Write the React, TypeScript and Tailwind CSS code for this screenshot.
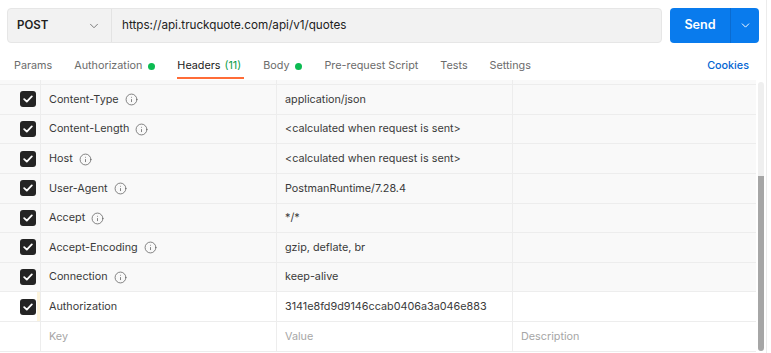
import React from 'react';
import { ChevronDown, Info } from 'lucide-react';

interface HeaderRow {
  key: string;
  value: string;
  info: boolean;
  edited?: boolean;
}

const rows: HeaderRow[] = [
  { key: 'Content-Type', value: 'application/json', info: true },
  { key: 'Content-Length', value: '<calculated when request is sent>', info: true },
  { key: 'Host', value: '<calculated when request is sent>', info: true },
  { key: 'User-Agent', value: 'PostmanRuntime/7.28.4', info: true },
  { key: 'Accept', value: '*/*', info: true },
  { key: 'Accept-Encoding', value: 'gzip, deflate, br', info: true },
  { key: 'Connection', value: 'keep-alive', info: true },
  { key: 'Authorization', value: '3141e8fd9d9146ccab0406a3a046e883', info: false, edited: true },
];

const Checkbox = () => (
  <div className="w-4 h-4 rounded-[3px] bg-[#242424] flex items-center justify-center">
    <svg width="10" height="8" viewBox="0 0 10 8" fill="none">
      <path d="M1.2 4.2L3.8 6.6L8.8 1.4" stroke="white" strokeWidth="1.8" strokeLinecap="round" strokeLinejoin="round" />
    </svg>
  </div>
);

const Tab = ({ label, active, dot, count }: { label: string; active?: boolean; dot?: boolean; count?: string }) => (
  <div className="relative h-full flex items-center">
    <span className={active ? 'text-[#212121]' : 'text-[#6b6b6b]'}>{label}</span>
    {count && <span className="ml-1 text-[#0a9e48]">{count}</span>}
    {dot && <span className="ml-[6px] w-[7px] h-[7px] rounded-full bg-[#0cbb52]" />}
    {active && <div className="absolute left-0 right-[-3px] bottom-[1px] h-[2px] bg-[#ff6c37]" />}
  </div>
);

export default function App() {
  return (
    <div className="w-[771px] h-[353px] bg-white overflow-hidden" style={{ fontFamily: 'Inter, "Noto Sans", sans-serif' }}>
      <div className="w-[767px] h-full border-r border-[#ececec] flex flex-col">
        {/* Request bar */}
        <div className="flex pt-2 pl-[7px] pr-[7px] h-[43px]">
          <div className="flex flex-1 h-[35px] bg-[#f2f2f2] border border-[#e6e6e6] rounded-[4px]">
            <div className="w-[104px] flex items-center justify-between pl-[9px] pr-[10px] border-r border-[#e3e3e3]">
              <span className="text-[11.5px] font-semibold text-[#212121]">POST</span>
              <ChevronDown size={14} strokeWidth={1.5} className="text-[#6b6b6b]" />
            </div>
            <div className="flex items-center pl-[10px] text-[11.7px] text-[#212121]">
              https://api.truckquote.com/api/v1/quotes
            </div>
          </div>
          <div className="ml-2 w-[89px] h-[35px] bg-[#097bed] rounded-[4px] flex">
            <div className="w-[61px] flex items-center justify-center text-white text-[12.6px] font-semibold border-r border-[#0a6bd0]">
              Send
            </div>
            <div className="flex-1 flex items-center justify-center text-white">
              <ChevronDown size={13} strokeWidth={1.8} />
            </div>
          </div>
        </div>

        {/* Tabs */}
        <div className="flex h-[37px] pt-[9px] pl-[14px] pr-[17px] text-[10.8px]">
          <div className="flex h-full gap-[22px]">
            <Tab label="Params" />
            <Tab label="Authorization" dot />
            <Tab label="Headers" count="(11)" active />
            <Tab label="Body" dot />
            <Tab label="Pre-request Script" />
            <Tab label="Tests" />
            <Tab label="Settings" />
          </div>
          <span className="ml-auto self-center text-[#0265d2] font-medium">Cookies</span>
        </div>

        {/* Table */}
        <div className="flex flex-1 min-h-0">
          <div className="w-[756px] flex flex-col text-[10.8px]">
            <div className="h-[5px] flex bg-[#f9f9f9] border-b border-[#ededed]">
              <div className="w-[41px] border-r border-[#ededed]" />
              <div className="w-[236px] border-r border-[#ededed]" />
              <div className="w-[236px] border-r border-[#ededed]" />
              <div className="flex-1" />
            </div>
            {rows.map((r) => (
              <div
                key={r.key}
                className={`h-[29.63px] flex border-b border-[#ededed] ${r.edited ? 'bg-white' : 'bg-[#f9f9f9]'}`}
              >
                <div className="w-[41px] flex items-center justify-end pr-[4px] border-r border-[#ededed] relative">
                  {r.edited && <div className="absolute right-0 top-0 bottom-0 w-[3px] bg-[#fdf4dc]" />}
                  <Checkbox />
                </div>
                <div className="w-[236px] flex items-center pl-2 pt-[1px] border-r border-[#ededed] text-[#3a3a3a]">
                  <span>{r.key}</span>
                  {r.info && <Info size={13} strokeWidth={1.4} className="ml-[6px] text-[#5e5e5e]" />}
                </div>
                <div className="w-[236px] flex items-center pl-2 pt-[1px] border-r border-[#ededed] text-[#3a3a3a]">
                  {r.value}
                </div>
                <div className="flex-1" />
              </div>
            ))}
            <div className="h-[29.63px] flex border-b border-[#ededed] bg-white text-[#a6a6a6]">
              <div className="w-[41px] border-r border-[#ededed]" />
              <div className="w-[236px] flex items-center pl-2 pt-[1px] border-r border-[#ededed]">Key</div>
              <div className="w-[236px] flex items-center pl-2 pt-[1px] border-r border-[#ededed]">Value</div>
              <div className="flex-1 flex items-center pl-2 pt-[1px]">Description</div>
            </div>
          </div>
          {/* Scrollbar */}
          <div className="ml-[2px] w-[6px] pt-[2px] pb-[2px] flex flex-col">
            <div className="h-[94px] bg-[#efefef] rounded-t-full" />
            <div className="flex-1 bg-[#a6a6a6] rounded-b-full" />
          </div>
        </div>
      </div>
    </div>
  );
}
